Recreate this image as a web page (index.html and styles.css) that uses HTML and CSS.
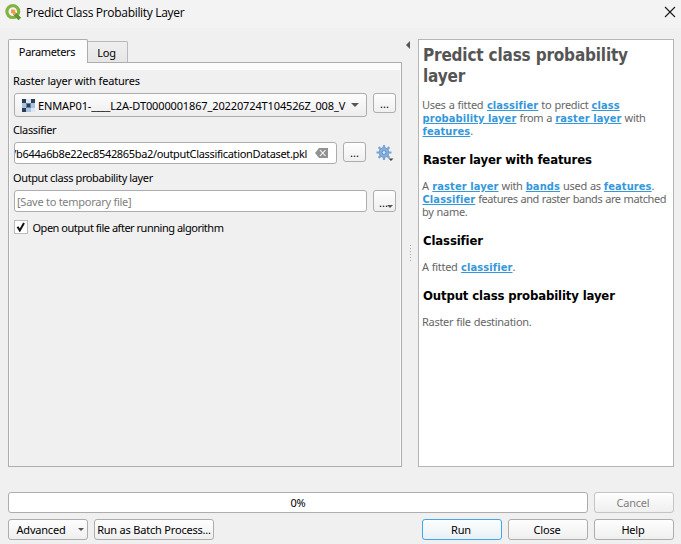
FILE: index.html
```html
<!DOCTYPE html>
<html lang="en">
<head>
<meta charset="utf-8">
<title>Predict Class Probability Layer</title>
<link rel="stylesheet" href="styles.css">
</head>
<body>
<header class="titlebar">
  <svg class="logo" width="17" height="17" viewBox="0 0 17 17">
    <circle cx="7.8" cy="7.6" r="5.9" fill="none" stroke="#80b440" stroke-width="3.2"/>
    <path d="M9.4 9.4l5.4 5.6" stroke="#5e9732" stroke-width="3.6"/>
    <path d="M6 5.6h3.4l1 1.4-.5 1 1.3 1.6-1.6 1.6-1.8-1.8-1.8-.4z" fill="#f0994e"/>
  </svg>
  <span class="title">Predict Class Probability Layer</span>
  <svg class="close" width="12" height="12" viewBox="0 0 12 12"><path d="M1 1l10 10M11 1L1 11" stroke="#1a1a1a" stroke-width="1.1"/></svg>
</header>
<main class="content">
  <section class="left">
    <div class="tabs">
      <div class="tab active">Parameters</div>
      <div class="tab">Log</div>
    </div>
    <div class="pane">
      <div class="label l1">Raster layer with features</div>
      <div class="row r1">
        <div class="combo">
          <svg width="13" height="13" viewBox="0 0 13 13" shape-rendering="crispEdges"><path fill="#a9c3e2" d="M0 0h13v13H0z"/><path fill="#2c3e50" d="M0 0h4v4H0zM9 0h4v4H9zM5 5h3v3H5zM0 9h4v4H0z"/><path fill="#6580a0" d="M4 4h5v1H4zM4 5h1v4H4zM8 5h1v4H8zM5 8h3v1H5z"/><path fill="#dbe7f5" d="M4 0h5v4H4zM9 9h4v4H9z"/></svg>
          <span class="layer">ENMAP01-____L2A-DT0000001867_20220724T104526Z_008_V</span>
          <i class="arrow"></i>
        </div>
        <div class="btn dots"><span>...</span></div>
      </div>
      <div class="label l2">Classifier</div>
      <div class="row r2">
        <div class="input path"><span class="file"><span>/b644a6b8e22ec8542865ba2/outputClassificationDataset.pkl</span></span>
          <svg class="clear" width="13" height="10" viewBox="0 0 13 10"><path d="M4 0h9v10H4L0 5z" fill="#929292"/><path d="M5 2l5.5 6M10.5 2L5 8" stroke="#fff" stroke-width="1.1"/></svg>
        </div>
        <div class="btn dots"><span>...</span></div>
        <svg class="gear" width="18" height="17" viewBox="0 0 18 17"><g transform="translate(8 7.5)"><g stroke="#7ba3d6" stroke-width="2.2"><path d="M0-7.5V7.5M-7.5 0H7.5M-5.4-5.4L5.4 5.4M5.4-5.4L-5.4 5.4"/></g><circle r="4.9" fill="#87aedb" stroke="#739fd3"/><circle r="1.9" fill="#dce8f4" stroke="#5e8fc9"/></g><path d="M12.5 13.5h5L15 16z" fill="#444"/></svg>
      </div>
      <div class="label l3">Output class probability layer</div>
      <div class="row r3">
        <div class="input"><span class="muted">[Save to temporary file]</span></div>
        <div class="btn dots menu"><span>...</span><i class="arrow"></i></div>
      </div>
      <div class="check">
        <span class="box"><svg width="10" height="10" viewBox="0 0 10 10"><path d="M1.5 4.8l2.3 3.6L8 1" fill="none" stroke="#111" stroke-width="2"/></svg></span>
        <span class="option">Open output file after running algorithm</span>
      </div>
    </div>
  </section>
  <div class="splitter"><i class="collapse"></i><i class="grip"></i></div>
  <article class="help">
    <h1>Predict class probability<br>layer</h1>
    <p>Uses a fitted <a>classifier</a> to predict <a>class</a><br><a>probability layer</a> from a <a>raster layer</a> with<br><a>features</a>.</p>
    <h2>Raster layer with features</h2>
    <p>A <a>raster layer</a> with <a>bands</a> used as <a>features</a>.<br><a>Classifier</a><span class="tight"> features and raster bands are matched</span><br>by name.</p>
    <h2>Classifier</h2>
    <p>A fitted <a>classifier</a>.</p>
    <h2>Output class probability layer</h2>
    <p>Raster file destination.</p>
  </article>
</main>
<footer class="footer">
  <div class="frow">
    <div class="progress">0%</div>
    <div class="btn std disabled">Cancel</div>
  </div>
  <div class="frow">
    <div class="btn std adv">Advanced<i class="arrow"></i></div>
    <div class="btn batch">Run as Batch Process...</div>
    <span class="spacer"></span>
    <div class="btn std primary">Run</div>
    <div class="btn std">Close</div>
    <div class="btn std">Help</div>
  </div>
</footer>
</body>
</html>
```
FILE: styles.css
```css
* { box-sizing: border-box; }
body {
  margin: 0;
  width: 681px;
  height: 544px;
  overflow: hidden;
  background: #f0f0f0;
  color: #000;
  font: 11px/13px "Noto Sans", sans-serif;
  letter-spacing: -0.2px;
}
.titlebar {
  display: flex;
  align-items: center;
  height: 28px;
  padding: 0 5px;
  background: #f3f3f3;
}
.logo { margin-top: -3px; }
.title { font: 12px/16px "Open Sans", sans-serif; letter-spacing: -0.31px; margin: -2px auto 0 4px; }
.close { margin-top: -4px; }
.content { display: flex; padding: 11px 7px 0 8px; height: 439px; }
.left { width: 394px; height: 428px; display: flex; flex-direction: column; }
.tabs { display: flex; align-items: flex-end; height: 24px; }
.tab {
  height: 22px;
  width: 40px;
  padding-right: 2px;
  border: 1px solid #b9b9b9;
  border-left: 0;
  border-bottom-color: #adadad;
  border-radius: 0 2px 0 0;
  background: linear-gradient(#efefef, #e6e6e6);
  text-align: center;
  line-height: 22px;
}
.tab.active {
  width: 80px;
  height: 24px;
  border: 1px solid #adadad;
  border-bottom: 0;
  border-radius: 2px 2px 0 0;
  background: #fcfcfc;
  line-height: 24px;
  letter-spacing: -0.35px;
  position: relative;
}
.pane {
  flex: 1;
  margin-top: -1px;
  border: 1px solid #adadad;
  padding: 0 5px;
  background: linear-gradient(#fcfcfc 7px, transparent 7px);
  box-shadow: inset 1px 0 #fafafa, inset -1px 0 #fafafa;
}
.label { height: 13px; margin-left: -1px; }
.l1 { margin-top: 11px; }
.l2 { margin-top: 6px; letter-spacing: -0.35px; }
.l3 { margin-top: 7px; letter-spacing: -0.38px; }
.row { display: flex; gap: 6px; }
.r1 { margin-top: 6px; height: 24px; }
.r2 { margin-top: 6px; height: 22px; }
.r3 { margin-top: 6px; height: 22px; }
.combo, .input, .progress {
  flex: 1;
  display: flex;
  align-items: center;
  border: 1px solid #adadad;
  border-radius: 3px;
  background: #fff;
  min-width: 0;
  overflow: hidden;
}
.combo { background: linear-gradient(#fdfdfd, #ededed); padding: 0 7px; }
.combo svg { flex: none; }
.layer { margin-left: 3px; letter-spacing: -0.13px; white-space: nowrap; }
.arrow { display: block; flex: none; border: 4px solid transparent; border-top-color: #555; border-bottom: 0; }
.combo .arrow { margin-left: auto; }
.input { padding: 0 2px; }
.input.path { padding: 0; }
.file {
  display: flex;
  justify-content: flex-end;
  width: 292px;
  overflow: hidden;
  white-space: nowrap;
  letter-spacing: -0.34px;
}
.clear { margin: 0 8px 0 auto; flex: none; }
.btn {
  display: flex;
  align-items: center;
  justify-content: center;
  border: 1px solid #adadad;
  border-radius: 3px;
  background: linear-gradient(#fefefe, #efefef);
}
.dots { width: 23px; height: 20px; position: relative; letter-spacing: 0; padding-top: 1px; }
.menu { height: 22px; padding: 2px 2px 0 0; }
.menu .arrow { position: absolute; right: 2px; bottom: 3px; border-width: 3px 3px 0; }
.gear { margin: 3px 2px 0 4px; flex: none; }
.muted { color: #808080; letter-spacing: -0.26px; }
.check { display: flex; align-items: center; height: 14px; margin-top: 8px; gap: 5px; }
.box { width: 14px; height: 14px; border: 1px solid #bcbcbc; background: #fff; display: grid; place-items: center; }
.option { letter-spacing: -0.48px; margin-left: -0.5px; }
.splitter { width: 16px; position: relative; }
.collapse { position: absolute; left: 4px; top: 2px; border: 4px solid transparent; border-right-color: #555; border-left: 0; }
.grip { position: absolute; left: 8px; top: 206px; width: 1px; height: 17px; background: repeating-linear-gradient(#aaa 0 1px, transparent 1px 3px); }
.help { width: 256px; height: 428px; border: 1px solid #b5b5b5; background: #fff; padding: 5px 3px; color: #666; }
h1, h2, p { margin: 0; white-space: nowrap; }
h1 { font: bold 17px/21px "DejaVu Sans Condensed", sans-serif; letter-spacing: -0.18px; color: #555; padding-left: 1px; }
h2 { font: bold 13px/16px "DejaVu Sans Condensed", sans-serif; letter-spacing: -0.14px; color: #000; margin: 15px 0 11px; padding-left: 1px; }
p { letter-spacing: -0.3px; word-spacing: 0.5px; }
.tight { letter-spacing: -0.43px; }
h1 + p { margin-top: 11px; }
p a { font: bold 11px/0 "DejaVu Sans Condensed", sans-serif; letter-spacing: 0.1px; word-spacing: 0; color: #3498db; text-decoration: underline; }
p a:first-child, br + a { margin-left: 0.5px; }
.footer { padding: 25px 7px 0 8px; }
.frow { display: flex; gap: 6px; height: 21px; margin-bottom: 6px; }
.progress { justify-content: center; }
.std { width: 80px; padding-right: 2px; }
.adv { gap: 12px; padding: 0 4px 0 8px; }
.adv .arrow { border-width: 3px 3px 0; }
.batch { width: 120px; }
.spacer { flex: 1; }
.disabled { color: #808080; border-color: #c4c4c4; }
.primary { border-color: #45a5ea; background: linear-gradient(#fcfeff, #e9f0f5); }
```
